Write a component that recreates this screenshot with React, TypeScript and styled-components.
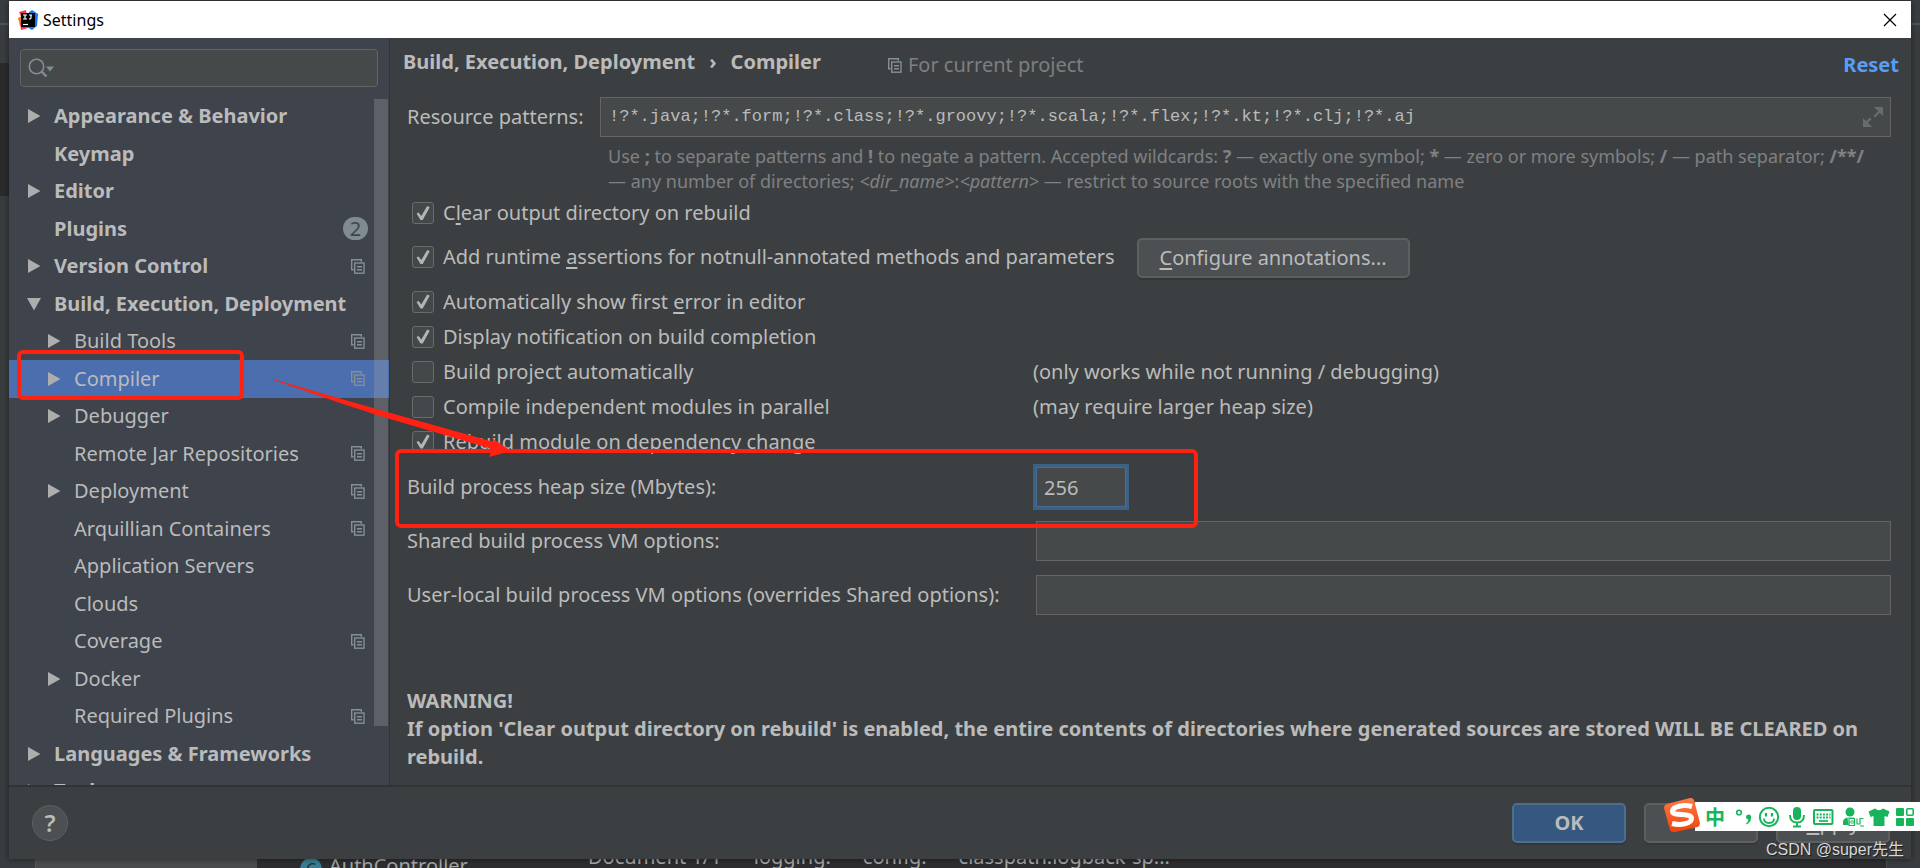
import React from "react";
import styled, { createGlobalStyle, css } from "styled-components";

const UI = `"Noto Sans", "Noto Sans CJK SC", sans-serif`;
const MONO = `"Liberation Mono", "DejaVu Sans Mono", monospace`;

const GlobalStyle = createGlobalStyle`
  *, *::before, *::after { box-sizing: border-box; }
  body {
    margin: 0;
    background: #3c3f41;
    color: #bbbbbb;
    font-family: ${UI};
    font-size: 20px;
    line-height: 28px;
  }
  button, input { font: inherit; color: inherit; margin: 0; }
  button { cursor: pointer; }
  ul { list-style: none; margin: 0; padding: 0; }
  p { margin: 0; }
`;

/* ---------- desktop and the editor behind the dialog ---------- */

const Desktop = styled.div`
  position: relative;
  height: 100vh;
  overflow: hidden;
  padding: 1px 9px 9px;
`;

const Backdrop = styled.div`
  position: absolute;
  inset: 0;
  display: flex;
  flex-direction: column;
  justify-content: space-between;
  background: #3a3d3f;
`;

const BackdropTop = styled.div`
  height: 196px;
  display: flex;
  flex-direction: column;
`;

const BackdropToolbar = styled.div`
  height: 25px;
  border-bottom: 2px solid #515455;
`;

const BackdropTabs = styled.div`
  height: 38px;
`;

const BackdropEditor = styled.div`
  flex: 1;
  background: linear-gradient(90deg, #2b2b2b 50%, #3a3d3f 50%);
`;

const BackdropBottom = styled.div`
  height: 22px;
  display: flex;
  align-items: stretch;
  overflow: hidden;
  background: #2d2d2f;
  line-height: 22px;
  color: #a5a7a8;
`;

const BackdropGutter = styled.div`
  width: 36px;
  background: #3a3d3f;
  border-right: 1px solid #555758;
`;

const BackdropStripe = styled.div`
  width: 221px;
  background: #4a4c4e;
`;

const BackdropFile = styled.div`
  width: 234px;
  padding-left: 43px;
  display: flex;
  gap: 7px;
  line-height: 40px;
`;

const FileBadge = styled.span`
  width: 22px;
  height: 22px;
  margin-top: 12px;
  border-radius: 50%;
  background: #387f95;
  color: #23333a;
  font-size: 16px;
  line-height: 22px;
  text-align: center;
`;

const BackdropCrumbs = styled.div`
  flex: 1;
  padding-left: 97px;
  display: flex;
  gap: 32px;
`;

const BackdropEdge = styled.div`
  width: 34px;
  border-left: 1px solid #4a4c4e;
  background: #3a3d3f;
`;

/* ---------- dialog window ---------- */

const Window = styled.main`
  position: relative;
  height: 100%;
  display: flex;
  flex-direction: column;
  background: #3c3f41;
  box-shadow: 0 0 6px rgba(0, 0, 0, 0.5);
`;

const TitleBar = styled.header`
  flex: none;
  height: 37px;
  padding: 0 9px;
  display: flex;
  align-items: center;
  gap: 5px;
  background: #ffffff;
  color: #000000;
  font-size: 16px;
`;

const TitleText = styled.span`
  flex: 1;
`;

const IconButton = styled.button`
  padding: 0;
  border: 0;
  background: none;
  display: flex;
  align-items: center;
  justify-content: center;
`;

const CloseButton = styled(IconButton)`
  width: 24px;
  height: 24px;
`;

const Body = styled.div`
  flex: 1;
  min-height: 0;
  display: flex;
`;

/* ---------- sidebar ---------- */

const Sidebar = styled.nav`
  flex: none;
  width: 381px;
  padding-top: 11px;
  display: flex;
  flex-direction: column;
  gap: 11px;
  background: #3e434c;
  border-right: 1px solid #323436;
`;

const SearchField = styled.label`
  flex: none;
  height: 38px;
  margin: 0 11px;
  padding: 0 7px;
  display: flex;
  align-items: center;
  gap: 4px;
  background: #45494a;
  border: 1px solid #646464;
  border-radius: 4px;
`;

const SearchInput = styled.input`
  flex: 1;
  min-width: 0;
  padding: 0;
  border: 0;
  outline: 0;
  background: transparent;
`;

const TreeArea = styled.div`
  position: relative;
  flex: 1;
  min-height: 0;
  overflow: hidden;
`;

const Scrollbar = styled.div`
  position: absolute;
  top: 1px;
  right: 1px;
  width: 14px;
  height: 627px;
  background: rgba(166, 166, 166, 0.3);
`;

const TreeItem = styled.li`
  height: 37px;
  &:nth-child(even) {
    height: 38px;
  }
`;

const TreeRow = styled.button<{ $level: number; $selected?: boolean }>`
  width: 100%;
  height: 100%;
  padding: 0 24px 1px ${(p) => (p.$level ? 38 : 18)}px;
  border: 0;
  display: flex;
  align-items: center;
  text-align: left;
  background: ${(p) => (p.$selected ? "#4b6eaf" : "transparent")};
  font-weight: ${(p) => (p.$level ? 400 : 700)};
`;

const ArrowSlot = styled.span`
  flex: none;
  width: 27px;
  display: flex;
  align-items: center;
`;

const RowLabel = styled.span`
  flex: 1;
  white-space: nowrap;
`;

const CountBadge = styled.span`
  width: 25px;
  height: 23px;
  margin-right: -3px;
  border-radius: 12px;
  background: #7f8b91;
  color: #3e434c;
  font-weight: 400;
  line-height: 23px;
  text-align: center;
`;

/* ---------- settings page ---------- */

const Page = styled.section`
  flex: 1;
  min-width: 0;
  padding: 0 20px 0 17px;
`;

const PageHeader = styled.div`
  height: 54px;
  margin: 0 -8px 0 -4px;
  display: flex;
  align-items: center;
`;

const Breadcrumb = styled.h1`
  margin: 0;
  padding-bottom: 6px;
  display: flex;
  align-items: center;
  gap: 14px;
  font-size: 20px;
  line-height: 28px;
  font-weight: 700;
`;

const ProjectNote = styled.span`
  flex: 1;
  margin-left: 67px;
  display: flex;
  align-items: center;
  gap: 6px;
  color: #7d7f80;
`;

const ResetLink = styled.a`
  color: #589df6;
  font-weight: 700;
  text-decoration: none;
`;

const PatternRow = styled.div`
  padding-top: 5px;
  display: grid;
  grid-template-columns: 193px 1fr;
  align-items: center;
`;

const fieldBox = css`
  height: 40px;
  background: #45494a;
  border: 1px solid #646464;
`;

const PatternField = styled.div`
  ${fieldBox}
  padding: 0 7px 0 8px;
  display: flex;
  align-items: center;
`;

const PatternInput = styled.input`
  flex: 1;
  min-width: 0;
  padding: 0;
  border: 0;
  outline: 0;
  background: transparent;
  font-family: ${MONO};
  font-size: 17px;
`;

const Hint = styled.p`
  margin: 7px 0 0 201px;
  color: #7f8182;
  font-size: 18px;
  line-height: 25px;
  white-space: nowrap;
`;

const OptionRow = styled.div<{ $height?: number }>`
  height: ${(p) => p.$height ?? 35}px;
  display: grid;
  grid-template-columns: 626px 1fr;
  align-items: center;
`;

const ButtonOptionRow = styled.div`
  height: 52px;
  display: flex;
  align-items: center;
  gap: 22px;

  label {
    padding-bottom: 2px;
  }
`;

const CheckLabel = styled.label`
  padding-left: 5px;
  display: flex;
  align-items: center;
  gap: 9px;
  white-space: nowrap;

  u {
    text-underline-offset: 3px;
  }
`;

const CheckBox = styled.input`
  appearance: none;
  flex: none;
  width: 22px;
  height: 22px;
  border: 1px solid #6b6b6b;
  border-radius: 3px;
  background: #43494a;
  display: grid;
  place-items: center;

  &:checked::before {
    content: "";
    width: 14px;
    height: 15px;
    background: #b4b4b4;
    clip-path: polygon(4% 54%, 18% 46%, 38% 70%, 80% 4%, 98% 12%, 48% 96%, 32% 96%);
  }
`;

const Button = styled.button<{ $primary?: boolean }>`
  height: 40px;
  min-width: 114px;
  padding: 0 21px;
  border: 2px solid ${(p) => (p.$primary ? "#4c708c" : "#5e6060")};
  border-radius: 5px;
  background: ${(p) => (p.$primary ? "#365880" : "#4c5052")};
  box-shadow: 0 2px 0 rgba(0, 0, 0, 0.12);
  font-weight: ${(p) => (p.$primary ? 700 : 400)};
  line-height: 28px;

  u {
    text-underline-offset: 3px;
  }
`;

const FieldList = styled.div`
  padding-top: 1px;
`;

const FieldRow = styled.div`
  height: 54px;
  display: grid;
  grid-template-columns: 629px 1fr;
  align-items: center;
  white-space: nowrap;
`;

const TextField = styled.input<{ $short?: boolean }>`
  ${fieldBox}
  width: ${(p) => (p.$short ? "90px" : "100%")};
  padding: 0 7px;
  border-radius: 0;
  outline: ${(p) => (p.$short ? "3px solid #3d6185" : "0")};
  ${(p) => p.$short && "border-color: #466d94;"}
`;

const Warning = styled.p`
  margin-top: 65px;
  font-weight: 700;
`;

/* ---------- footer ---------- */

const Footer = styled.footer`
  flex: none;
  height: 74px;
  padding: 0 21px 0 23px;
  display: flex;
  align-items: center;
  justify-content: space-between;
  border-top: 2px solid #323434;
`;

const HelpButton = styled.button`
  width: 36px;
  height: 36px;
  padding: 0;
  border: 1px solid #5e6060;
  border-radius: 50%;
  background: #4c5052;
  font-size: 24px;
  line-height: 34px;
  font-weight: 600;
`;

const ButtonGroup = styled.div`
  display: flex;
  gap: 18px;
`;

/* ---------- overlays ---------- */

const RedFrame = styled.div<{ $x: number; $y: number; $w: number; $h: number }>`
  position: absolute;
  left: ${(p) => p.$x}px;
  top: ${(p) => p.$y}px;
  width: ${(p) => p.$w}px;
  height: ${(p) => p.$h}px;
  border: 4px solid #ff2112;
  border-radius: 6px;
  pointer-events: none;
`;

const ArrowMark = styled.svg`
  position: absolute;
  left: 270px;
  top: 376px;
  pointer-events: none;
`;

const InputMethodBar = styled.div`
  position: absolute;
  right: 0;
  bottom: 37px;
  width: 225px;
  height: 29px;
  padding-left: 10px;
  display: flex;
  align-items: center;
  background: #ffffff;
  color: #18b45b;
`;

const InputMethodLogo = styled.svg`
  position: absolute;
  left: -32px;
  top: -5px;
`;

const ModeGlyph = styled.span`
  flex: none;
  width: 26px;
  font-family: "Noto Sans CJK SC", sans-serif;
  font-size: 20px;
  line-height: 28px;
  font-weight: 700;
`;

const ToolStrip = styled.svg`
  flex: none;
`;

const Watermark = styled.div`
  position: absolute;
  right: 16px;
  bottom: 6px;
  color: #d6d7d8;
  font-family: "Liberation Sans", "Noto Sans CJK SC", sans-serif;
  font-size: 16px;
  line-height: 24px;
  text-shadow: 1px 1px 1px rgba(0, 0, 0, 0.6);
`;

/* ---------- icons ---------- */

const IdeLogo = () => (
  <svg width="20" height="20" viewBox="0 0 20 20" aria-hidden="true">
    <path d="M1 2 L8 0 L9 6 L4 9 Z" fill="#fe315d" />
    <path d="M0 8 L6 5 L7 14 L2 16 Z" fill="#f97a12" />
    <path d="M2 13 L9 14 L10 18 L3 20 Z" fill="#fe315d" />
    <path d="M11 2 L14 0 L20 4 L19 16 L14 20 L9 17 Z" fill="#087cfa" />
    <rect x="3" y="3" width="14" height="14" fill="#000" />
    <path d="M5 5h4M7 5v4M5 9h4M11 5h3M13 5v3q0 1-2 1" stroke="#fff" fill="none" strokeWidth="1.2" />
    <path d="M5 14.5h5" stroke="#fff" strokeWidth="1.2" />
  </svg>
);

const CloseIcon = () => (
  <svg width="14" height="14" viewBox="0 0 14 14" aria-hidden="true">
    <path d="M1 1L13 13M13 1L1 13" stroke="#000" strokeWidth="1.2" />
  </svg>
);

const SearchIcon = () => (
  <svg width="26" height="20" viewBox="0 0 26 20" aria-hidden="true">
    <circle cx="8.5" cy="8.5" r="7.2" stroke="#7f8f96" strokeWidth="1.6" fill="none" />
    <path d="M13.5 13.5L18.5 18.5" stroke="#7f8f96" strokeWidth="2.4" />
    <path d="M18 8.5h8l-4 5z" fill="#7f8f96" />
  </svg>
);

const TreeArrow = ({ open }: { open?: boolean }) => (
  <svg width="14" height="14" viewBox="0 0 14 14" aria-hidden="true">
    <path d={open ? "M0 1h14l-7 12.500z" : "M1 0v14l12.500-7z"} fill="#adadad" />
  </svg>
);

const ProjectIcon = () => (
  <svg width="14" height="15" viewBox="0 0 14 15" fill="none" stroke="#848f96" strokeWidth="1.4" aria-hidden="true">
    <path d="M2.700 10.700H.7V.7h9.600v2" />
    <rect x="3.700" y="4" width="9.300" height="10.200" />
    <path d="M6 7.700h5M6 10.700h5" />
  </svg>
);

const ExpandIcon = () => (
  <svg width="20" height="20" viewBox="0 0 20 20" fill="#646e72" aria-hidden="true">
    <path d="M11 0H20v9l-3.200-3.200-4.600 4.600-1.600-1.600 4.600-4.600zM9 20H0v-9l3.200 3.200 3.600-3.600 1.600 1.600-3.600 3.600z" />
  </svg>
);

const SogouLogo = () => (
  <InputMethodLogo width="38" height="36" viewBox="0 0 38 36" aria-hidden="true">
    <defs>
      <linearGradient id="logoFill" x1="0" y1="0" x2="0" y2="1">
        <stop offset="0" stopColor="#ff7a45" />
        <stop offset="1" stopColor="#f0440c" />
      </linearGradient>
    </defs>
    <path d="M4 7 L27 1 Q30 0.500 31 3 L37 26 Q37 29 34.500 30 L12 35 Q8 35.500 7 33 L1 11 Q1 8 4 7Z" fill="url(#logoFill)" />
    <path d="M29 9.500C21 7.500 9.500 9 9.500 14.500C9.500 19.500 28.500 15.500 28.500 21.500C28.500 27 17 28.500 9 26.500" stroke="#fff" strokeWidth="5" fill="none" />
  </InputMethodLogo>
);

const ToolIcons = () => (
  <ToolStrip width="184" height="22" viewBox="0 0 184 22" fill="none" stroke="#18b45b" aria-hidden="true">
    <circle cx="8" cy="6.500" r="2.300" strokeWidth="1.600" />
    <path d="M15 11a2.600 2.600 0 1 1 5 1q0 4-4.500 6.500l-.5-1q2.500-2 2.300-4-2.300-.3-2.300-2.500z" fill="#18b45b" stroke="none" />
    <circle cx="38" cy="11" r="9.200" strokeWidth="2" />
    <path d="M33 12.500q0 4.500 5 4.500t5-4.500" strokeWidth="1.800" />
    <path d="M35 7v3.500M41 7v3.500" strokeWidth="2.200" />
    <rect x="62" y="1" width="8" height="13" rx="4" fill="#18b45b" stroke="none" />
    <path d="M59 9q0 7.500 7 7.500t7-7.500M66 16v4.500M62 20.500h8" strokeWidth="1.900" />
    <rect x="83" y="4" width="18.500" height="14" rx="1" strokeWidth="2" />
    <path d="M85.500 8.500h14M85.500 11.500h14" strokeWidth="2" strokeDasharray="2 1.200" />
    <path d="M88 15h9" strokeWidth="1.700" />
    <circle cx="119" cy="6" r="4.500" fill="#18b45b" stroke="none" />
    <path d="M112 19v-3q0-4 5-4.500h6v7.500z" fill="#18b45b" stroke="none" />
    <path d="M118 13h6v6h-5zM118 16h5M126 13h7M126 19h7M129.500 13v6" stroke="#fff" strokeWidth="2.600" />
    <path d="M118 12.500h5.500v7h-5.500zM118 16h5M126 12.500v5.500h3v-5.500h3.500M129 20h4" strokeWidth="1.200" />
    <path d="M144 2.500q4 3.500 8 0l6.500 3-2 5.500-3-1v10h-11v-10l-3 1-2-5.500z" fill="#18b45b" stroke="none" />
    <g fill="#18b45b" stroke="none">
      <rect x="165" y="2" width="8" height="8" rx="1" />
      <rect x="165" y="12" width="8" height="8" rx="1" />
      <rect x="175" y="12" width="8" height="8" rx="1" />
    </g>
    <rect x="175.800" y="2.800" width="6.400" height="6.400" rx="1" strokeWidth="1.600" />
  </ToolStrip>
);

/* ---------- data ---------- */

interface TreeEntry {
  label: string;
  level: number;
  arrow?: "closed" | "open";
  project?: boolean;
  count?: number;
  selected?: boolean;
}

const TREE: TreeEntry[] = [
  { label: "Appearance & Behavior", level: 0, arrow: "closed" },
  { label: "Keymap", level: 0 },
  { label: "Editor", level: 0, arrow: "closed" },
  { label: "Plugins", level: 0, count: 2 },
  { label: "Version Control", level: 0, arrow: "closed", project: true },
  { label: "Build, Execution, Deployment", level: 0, arrow: "open" },
  { label: "Build Tools", level: 1, arrow: "closed", project: true },
  { label: "Compiler", level: 1, arrow: "closed", project: true, selected: true },
  { label: "Debugger", level: 1, arrow: "closed" },
  { label: "Remote Jar Repositories", level: 1, project: true },
  { label: "Deployment", level: 1, arrow: "closed", project: true },
  { label: "Arquillian Containers", level: 1, project: true },
  { label: "Application Servers", level: 1 },
  { label: "Clouds", level: 1 },
  { label: "Coverage", level: 1, project: true },
  { label: "Docker", level: 1, arrow: "closed" },
  { label: "Required Plugins", level: 1, project: true },
  { label: "Languages & Frameworks", level: 0, arrow: "closed" },
  { label: "Tools", level: 0, arrow: "closed" },
];

const CHECKS = [
  { label: <>Automatically show first <u>e</u>rror in editor</>, checked: true },
  { label: "Display notification on build completion", checked: true },
  { label: "Build project automatically", checked: false, note: "(only works while not running / debugging)" },
  { label: "Compile independent modules in parallel", checked: false, note: "(may require larger heap size)" },
  { label: "Rebuild module on dependency change", checked: true },
];

const Check = ({ checked, children }: { checked: boolean; children: React.ReactNode }) => (
  <CheckLabel>
    <CheckBox type="checkbox" defaultChecked={checked} />
    <span>{children}</span>
  </CheckLabel>
);

export default function App() {
  return (
    <Desktop>
      <GlobalStyle />
      <Backdrop aria-hidden="true">
        <BackdropTop>
          <BackdropToolbar />
          <BackdropTabs />
          <BackdropEditor />
        </BackdropTop>
        <BackdropBottom>
          <BackdropGutter />
          <BackdropStripe />
          <BackdropFile>
            <FileBadge>C</FileBadge>
            <span>AuthController</span>
          </BackdropFile>
          <BackdropCrumbs>
            <span>Document 1/1</span>
            <span>logging:</span>
            <span>config:</span>
            <span>classpath:logback-sp...</span>
          </BackdropCrumbs>
          <BackdropEdge />
        </BackdropBottom>
      </Backdrop>

      <Window>
        <TitleBar>
          <IdeLogo />
          <TitleText>Settings</TitleText>
          <CloseButton aria-label="Close">
            <CloseIcon />
          </CloseButton>
        </TitleBar>

        <Body>
          <Sidebar>
            <SearchField>
              <SearchIcon />
              <SearchInput type="text" aria-label="Search settings" />
            </SearchField>
            <TreeArea>
              <ul>
                {TREE.map((entry) => (
                  <TreeItem key={entry.label}>
                    <TreeRow $level={entry.level} $selected={entry.selected}>
                      <ArrowSlot>{entry.arrow && <TreeArrow open={entry.arrow === "open"} />}</ArrowSlot>
                      <RowLabel>{entry.label}</RowLabel>
                      {entry.count && <CountBadge>{entry.count}</CountBadge>}
                      {entry.project && <ProjectIcon />}
                    </TreeRow>
                  </TreeItem>
                ))}
              </ul>
              <Scrollbar />
            </TreeArea>
          </Sidebar>

          <Page>
            <PageHeader>
              <Breadcrumb>
                <span>Build, Execution, Deployment</span>
                <span>›</span>
                <span>Compiler</span>
              </Breadcrumb>
              <ProjectNote>
                <ProjectIcon />
                For current project
              </ProjectNote>
              <ResetLink href="#reset">Reset</ResetLink>
            </PageHeader>

            <PatternRow>
              <label htmlFor="patterns">Resource patterns:</label>
              <PatternField>
                <PatternInput
                  id="patterns"
                  type="text"
                  defaultValue="!?*.java;!?*.form;!?*.class;!?*.groovy;!?*.scala;!?*.flex;!?*.kt;!?*.clj;!?*.aj"
                />
                <IconButton aria-label="Expand">
                  <ExpandIcon />
                </IconButton>
              </PatternField>
            </PatternRow>
            <Hint>
              Use <b>;</b> to separate patterns and <b>!</b> to negate a pattern. Accepted wildcards: <b>?</b> — exactly one
              symbol; <b>*</b> — zero or more symbols; <b>/</b> — path separator; <b>/**/</b>
              <br />— any number of directories; <i>&lt;dir_name&gt;</i>:<i>&lt;pattern&gt;</i> — restrict to source roots
              with the specified name
            </Hint>

            <OptionRow $height={38}>
              <Check checked>
                C<u>l</u>ear output directory on rebuild
              </Check>
            </OptionRow>
            <ButtonOptionRow>
              <Check checked>
                Add runtime <u>a</u>ssertions for notnull-annotated methods and parameters
              </Check>
              <Button>
                <u>C</u>onfigure annotations...
              </Button>
            </ButtonOptionRow>
            {CHECKS.map((c, i) => (
              <OptionRow key={i}>
                <Check checked={c.checked}>{c.label}</Check>
                {c.note && <span>{c.note}</span>}
              </OptionRow>
            ))}

            <FieldList>
              <FieldRow>
                <label htmlFor="heap">Build process heap size (Mbytes):</label>
                <TextField id="heap" type="text" defaultValue="256" $short />
              </FieldRow>
              <FieldRow>
                <label htmlFor="shared">Shared build process VM options:</label>
                <TextField id="shared" type="text" />
              </FieldRow>
              <FieldRow>
                <label htmlFor="local">User-local build process VM options (overrides Shared options):</label>
                <TextField id="local" type="text" />
              </FieldRow>
            </FieldList>

            <Warning>
              WARNING!
              <br />
              If option 'Clear output directory on rebuild' is enabled, the entire contents of directories where generated
              sources are stored WILL BE CLEARED on rebuild.
            </Warning>
          </Page>
        </Body>

        <Footer>
          <HelpButton aria-label="Help">?</HelpButton>
          <ButtonGroup>
            <Button $primary>OK</Button>
            <Button aria-label="Cancel" />
            <Button>
              <u>A</u>pply
            </Button>
          </ButtonGroup>
        </Footer>
      </Window>

      <RedFrame $x={17} $y={350} $w={227} $h={50} />
      <RedFrame $x={395} $y={449} $w={803} $h={79} />
      <ArrowMark width="244" height="84" viewBox="270 376 244 84" aria-hidden="true">
        <path d="M272 379.500L274 379.500L380 410L494 442L492 438L511 451L489 457L492 449L380 416L340 403Z" fill="#ff2112" />
      </ArrowMark>

      <InputMethodBar>
        <SogouLogo />
        <ModeGlyph>中</ModeGlyph>
        <ToolIcons />
      </InputMethodBar>
      <Watermark>CSDN @super先生</Watermark>
    </Desktop>
  );
}
